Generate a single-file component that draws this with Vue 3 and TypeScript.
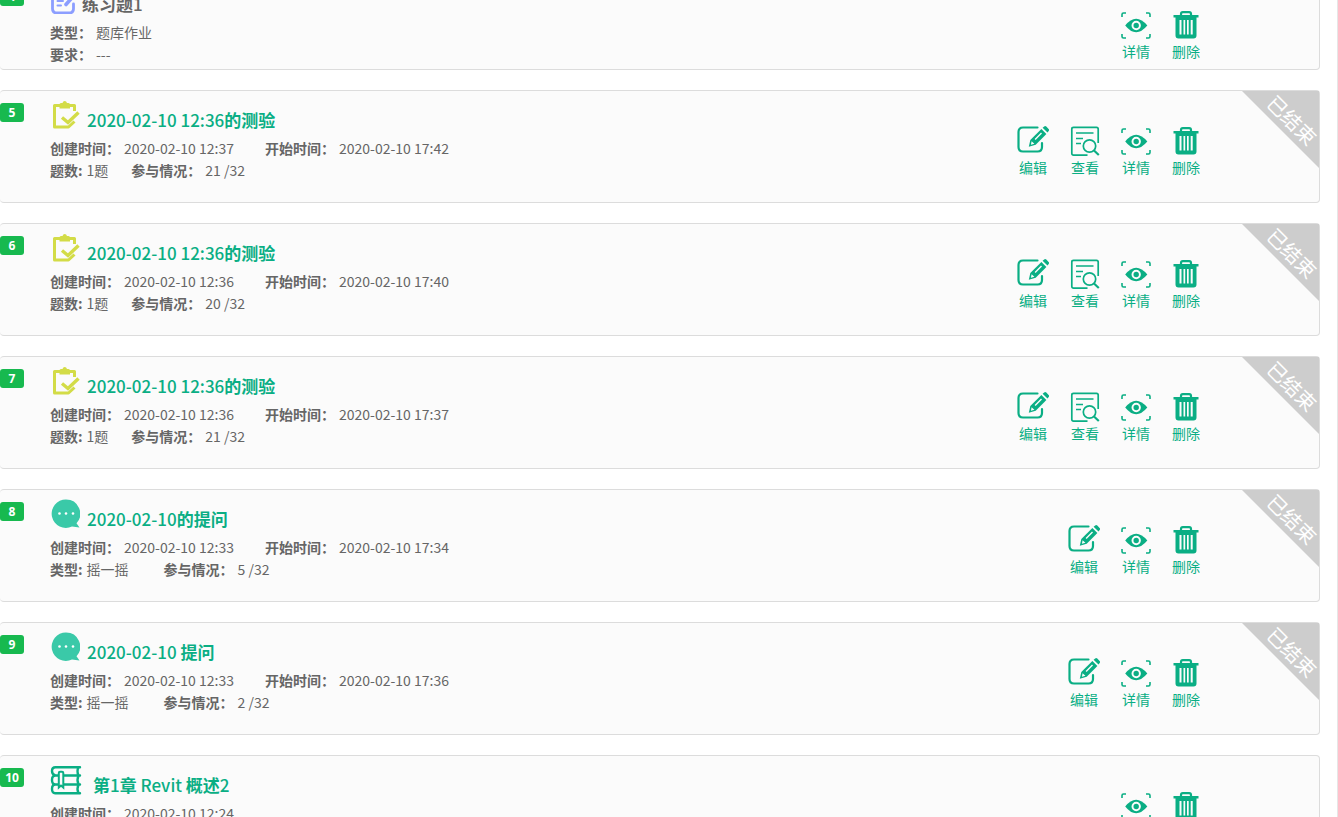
<script setup lang="ts">
type Kind = 'homework' | 'quiz' | 'ask' | 'course'
type Action = 'edit' | 'view' | 'detail' | 'remove'

interface Field {
  label: string
  value: string
  wide?: boolean
}

interface Activity {
  no: number
  kind: Kind
  title: string
  rows: Field[][]
  actions: Action[]
  ended: boolean
}

const actionNames: Record<Action, string> = {
  edit: '编辑',
  view: '查看',
  detail: '详情',
  remove: '删除',
}

// Chinese runs of a title are set bolder than its digits and Latin letters.
function runs(title: string): { text: string; han: boolean }[] {
  return title
    .split(/([\u4e00-\u9fff]+)/)
    .filter(Boolean)
    .map((text) => ({ text, han: /[\u4e00-\u9fff]/.test(text) }))
}

function times(created: string, started: string): Field[] {
  return [
    { label: '创建时间：', value: `2020-02-10 ${created}` },
    { label: '开始时间：', value: `2020-02-10 ${started}` },
  ]
}

function quiz(no: number, created: string, started: string, joined: number): Activity {
  return {
    no,
    kind: 'quiz',
    title: '2020-02-10 12:36的测验',
    rows: [
      times(created, started),
      [
        { label: '题数:', value: '1题' },
        { label: '参与情况：', value: `${joined} /32` },
      ],
    ],
    actions: ['edit', 'view', 'detail', 'remove'],
    ended: true,
  }
}

function ask(no: number, title: string, started: string, joined: number): Activity {
  return {
    no,
    kind: 'ask',
    title,
    rows: [
      times('12:33', started),
      [
        { label: '类型:', value: '摇一摇', wide: true },
        { label: '参与情况：', value: `${joined} /32` },
      ],
    ],
    actions: ['edit', 'detail', 'remove'],
    ended: true,
  }
}

const activities: Activity[] = [
  {
    no: 4,
    kind: 'homework',
    title: '练习题1',
    rows: [[{ label: '类型：', value: '题库作业' }], [{ label: '要求：', value: '---' }]],
    actions: ['detail', 'remove'],
    ended: false,
  },
  quiz(5, '12:37', '17:42', 21),
  quiz(6, '12:36', '17:40', 20),
  quiz(7, '12:36', '17:37', 21),
  ask(8, '2020-02-10的提问', '17:34', 5),
  ask(9, '2020-02-10 提问', '17:36', 2),
  {
    no: 10,
    kind: 'course',
    title: '第1章 Revit 概述2',
    rows: [[{ label: '创建时间：', value: '2020-02-10 12:24' }]],
    actions: ['detail', 'remove'],
    ended: false,
  },
]
</script>

<template>
  <main class="page">
    <ul class="list">
      <li v-for="item in activities" :key="item.no" class="card" :class="item.kind">
        <span class="badge">{{ item.no }}</span>

        <div class="info">
          <h3 class="heading">
            <span class="kind-icon">
              <svg v-if="item.kind === 'homework'" width="26" height="30" viewBox="0 0 26 30" fill="none" stroke="#8c9eff" stroke-width="2.800" stroke-linecap="round">
                <path d="M14 6H6Q2.500 6 2.500 9.500V24.500Q2.500 29 7 29H19Q23.500 29 23.500 24.500V20" />
                <path d="M16 20.500L23.500 12" stroke-width="3.600" />
                <path d="M7.500 17H13M7.500 21.500H11" stroke-width="2" />
              </svg>
              <svg v-else-if="item.kind === 'quiz'" width="30" height="30" viewBox="0 0 30 30" fill="none" stroke="#d3dc47" stroke-width="3" stroke-linejoin="round">
                <path d="M24.500 11V5.500H4.500V27H18.500L24.500 21.500" />
                <path d="M9.500 8.500V4.500Q9.500 3 11 3H12.500Q13 1 14.700 1T17 3H18.500Q20 3 20 4.500V8.500Z" fill="#d3dc47" stroke="none" />
                <path d="M12 17.500L18 22.500L28.500 12.500" stroke-width="3.400" stroke-linejoin="miter" />
              </svg>
              <svg v-else-if="item.kind === 'ask'" width="30" height="30" viewBox="0 0 30 30">
                <path d="M16 0.500A14.200 14.200 0 1 0 22 27.500L29.500 28.500L26.500 24.300A14.200 14.200 0 0 0 16 0.500Z" fill="#3ac9a8" />
                <g fill="#fff"><circle cx="9.500" cy="14.500" r="1.300" /><circle cx="16" cy="14.500" r="1.300" /><circle cx="23" cy="14.500" r="1.300" /></g>
              </svg>
              <svg v-else width="32" height="30" viewBox="0 0 32 30" fill="none" stroke="#0aae84" stroke-width="2.400" stroke-linecap="round">
                <path d="M30 2.200H5.500Q2 2.200 2 6T5.500 10.500H30M28.500 2.200Q26.500 6 28.500 10.500M5.500 10.500Q2 10.500 2 15T5.500 19.500H30M28.500 10.500Q26.500 15 28.500 19.500M5.500 19.500Q2 19.500 2 24T5.500 28.200H30M28.500 19.500Q26.500 24 28.500 28.200" />
                <path d="M8.800 22.500V8Q8.800 6.700 10.100 6.700H12Q13.300 6.700 13.300 8V22.500L11 20.500Z" fill="#fbfbfb" stroke-width="2" />
              </svg>
            </span>
            <span v-if="item.kind === 'homework'" class="title">
              <span v-for="(run, i) in runs(item.title)" :key="i" :class="{ han: run.han }">{{ run.text }}</span>
            </span>
            <a v-else class="title" href="#">
              <span v-for="(run, i) in runs(item.title)" :key="i" :class="{ han: run.han }">{{ run.text }}</span>
            </a>
          </h3>
          <p v-for="(row, r) in item.rows" :key="r" class="row" :class="{ counts: r === 1 }">
            <span v-for="field in row" :key="field.label" class="field" :class="{ wide: field.wide }">
              <b>{{ field.label }}</b><span>{{ field.value }}</span>
            </span>
          </p>
        </div>

        <div class="actions">
          <button v-for="action in item.actions" :key="action" type="button" class="action" :class="action">
            <svg v-if="action === 'edit'" width="32" height="30" viewBox="0 2 32 30">
              <path d="M20.500 3.500H6Q1.500 3.500 1.500 8V23Q1.500 27.500 6 27.500H20.500Q25 27.500 25 23V19" fill="none" stroke="#0aae84" stroke-width="2.200" stroke-linecap="round" />
              <path d="M24.400 4.900L29.400 9.900L18.700 20.700L11.800 22.800L13.300 16Z" fill="#0aae84" />
              <path d="M25.600 3.700L27.200 2.400Q28.300 1.600 29.300 2.600L31.600 4.900Q32.500 5.900 31.700 6.900L30.500 8.600Z" fill="#0aae84" />
              <path d="M14.600 17.200L13.900 20.800L17.400 19.800ZM17.600 14.900L24 8.500L25 9.500L18.600 15.900Z" fill="#fbfbfb" />
            </svg>
            <svg v-else-if="action === 'view'" width="30" height="30" viewBox="0 0 30 30" fill="none" stroke="#0aae84" stroke-width="1.700">
              <path d="M17.500 29.100H3.500Q1.800 29.100 1.800 27.500V3Q1.800 1.300 3.500 1.300H26.500Q28.200 1.300 28.200 3V17" />
              <path d="M6 7H23.500M6 12.500H13M6 17.500H11" />
              <circle cx="19.500" cy="20" r="6.200" />
              <path d="M24 24.500L28.800 29" stroke-width="2.200" />
            </svg>
            <svg v-else-if="action === 'detail'" width="30" height="30" viewBox="0 0 30 30">
              <path d="M1 7V4.500Q1 3 2.500 3H5M25 3H27.500Q29 3 29 4.500V7M29 24V26.500Q29 28 27.500 28H25M5 28H2.500Q1 28 1 26.500V24" fill="none" stroke="#0aae84" stroke-width="1.600" />
              <path d="M4.200 15.500Q15 2 26.300 15.500Q15 29 4.200 15.500Z" fill="#0aae84" />
              <circle cx="15.200" cy="15.500" r="3.700" fill="none" stroke="#fbfbfb" stroke-width="2" />
            </svg>
            <svg v-else width="28" height="30" viewBox="0 0 28 30">
              <path d="M9 6V4Q9 2.200 10.800 2.200H17.200Q19 2.200 19 4V6" fill="none" stroke="#0aae84" stroke-width="2.200" />
              <path d="M1.500 5H26.500V7.500H24.500V25.500Q24.500 28.500 21.500 28.500H6.500Q3.500 28.500 3.500 25.500V7.500H1.500Z" fill="#0aae84" />
              <path d="M7.500 10H9.500V24.500H7.500ZM11.500 10H13.200V24.500H11.500ZM15 10H16.700V24.500H15ZM18.700 10H20.700V24.500H18.700Z" fill="#fbfbfb" />
            </svg>
            <span>{{ actionNames[action] }}</span>
          </button>
        </div>

        <div v-if="item.ended" class="ribbon"><span>已结束</span></div>
      </li>
    </ul>
  </main>
</template>

<style>
body {
  margin: 0;
  overflow: hidden;
  background: #fff;
}
</style>

<style scoped>
.page {
  box-sizing: border-box;
  height: 100vh;
  overflow: hidden;
  padding-right: 17px;
  border-right: 1px solid #e6e6e6;
  font: 14px/22px "Noto Sans CJK SC", "Open Sans", sans-serif;
  color: #666;
}
.list {
  display: flex;
  flex-direction: column;
  gap: 20px;
  margin: -26px 0 0;
  padding: 0;
  list-style: none;
}
.card {
  position: relative;
  box-sizing: border-box;
  display: flex;
  justify-content: space-between;
  min-height: 113px;
  padding: 9px 119px 3px 50px;
  border: 1px solid #dcdcdc;
  border-left: 0;
  border-radius: 4px;
  background: #fbfbfb;
}
.card.homework {
  min-height: 96px;
}
.badge {
  position: absolute;
  left: 0;
  top: 12px;
  width: 24px;
  border-radius: 3px;
  background: #17b94f;
  color: #fff;
  font: bold 12px/19px "Open Sans", sans-serif;
  text-align: center;
}
.heading {
  display: flex;
  align-items: flex-end;
  height: 31px;
  margin: 0 0 6px;
  font-size: 17px;
  font-weight: 500;
  line-height: 22px;
}
.kind-icon {
  width: 37px;
  height: 31px;
}
.homework .kind-icon {
  width: 32px;
}
.course .kind-icon {
  width: 43px;
}
.kind-icon svg,
.action svg {
  display: block;
}
.title {
  color: #666;
  text-decoration: none;
  white-space: pre-wrap;
}
a.title {
  color: #0aae84;
}
.title {
  display: flex;
}
.han {
  font-weight: bold;
}
.row {
  display: flex;
  gap: 31px;
  margin: 0;
}
.row.counts {
  gap: 23px;
}
.field {
  display: flex;
  gap: 4px;
}
.field.wide {
  margin-right: 12px;
}
.actions {
  display: flex;
  align-items: flex-start;
  gap: 21px;
  padding-top: 26px;
}
.action {
  display: flex;
  flex-direction: column;
  align-items: center;
  padding: 0;
  border: 0;
  background: none;
  color: #0aae84;
  font: inherit;
  cursor: pointer;
}
.ribbon {
  position: absolute;
  top: 0;
  right: 0;
  width: 77px;
  height: 77px;
  background: #cdcdcd;
  clip-path: polygon(0 0, 100% 0, 100% 100%);
  color: #fff;
  font-size: 20px;
}
.ribbon span {
  position: absolute;
  left: 20px;
  top: 18px;
  white-space: nowrap;
  transform: rotate(45deg);
}
</style>
